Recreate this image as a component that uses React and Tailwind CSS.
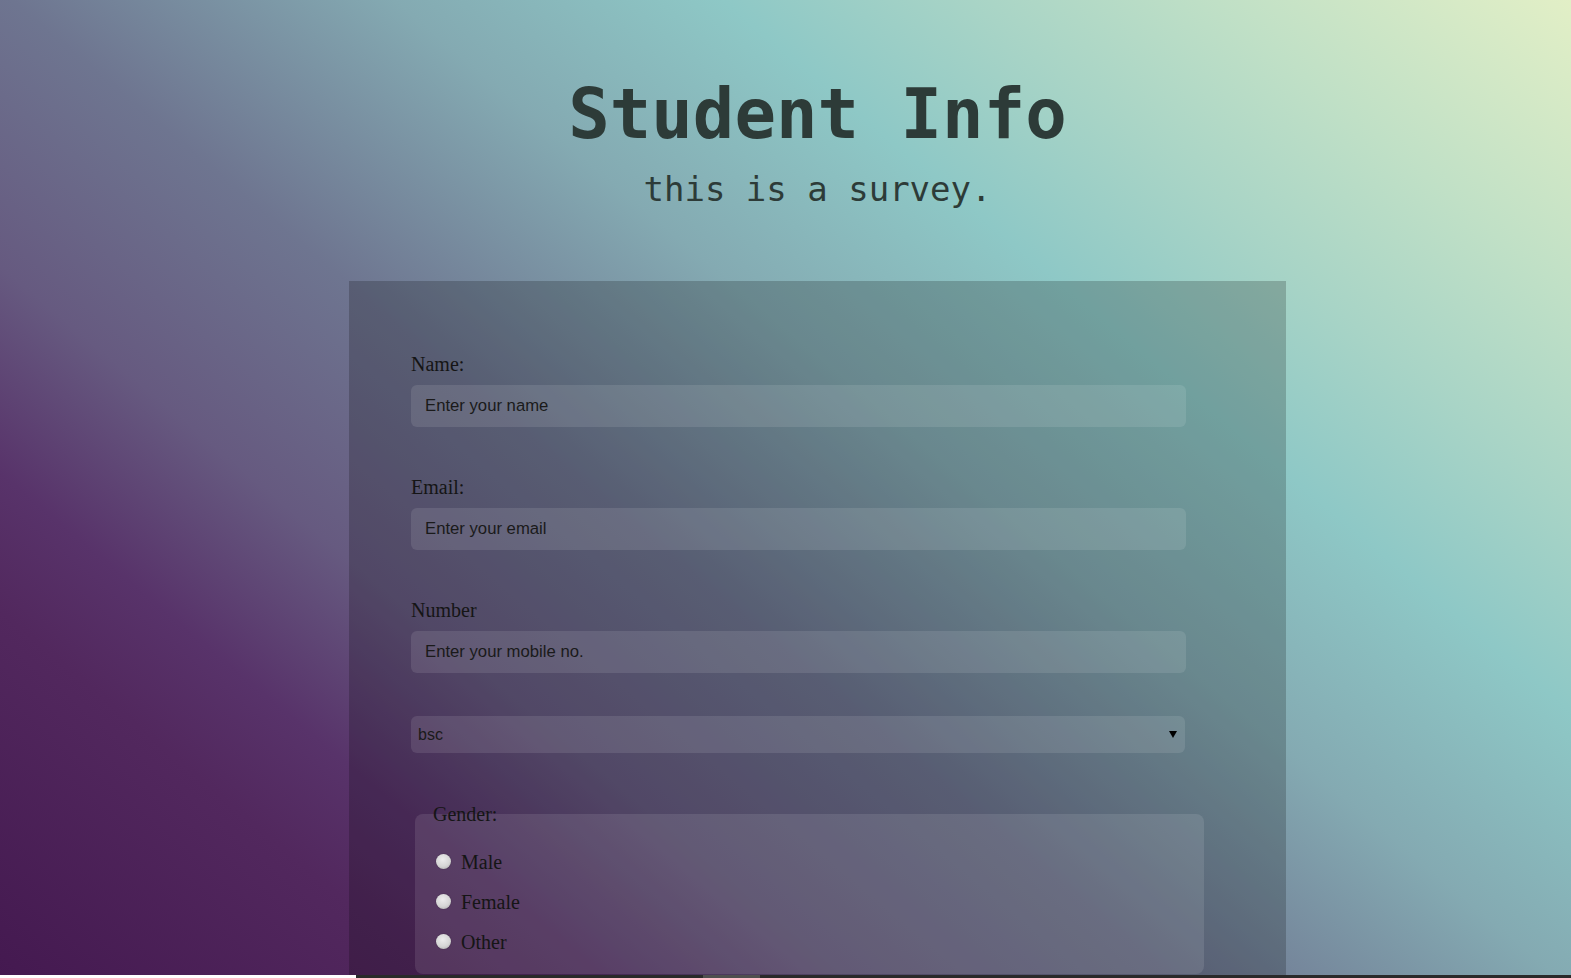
import { useState } from 'react';

const FIELDS = [
  { id: 'name', label: 'Name:', type: 'text', placeholder: 'Enter your name' },
  { id: 'email', label: 'Email:', type: 'email', placeholder: 'Enter your email' },
  { id: 'number', label: 'Number', type: 'tel', placeholder: 'Enter your mobile no.' },
];

const GENDERS = ['Male', 'Female', 'Other'];

export default function App() {
  const [course, setCourse] = useState('bsc');
  const [gender, setGender] = useState('');

  return (
    <div className="min-h-screen bg-fixed bg-[linear-gradient(40deg,#441950_0%,#52285e_16%,#58336a_22%,#665a80_31%,#6e7590_43%,#84aab2_57%,#8ec8c6_69%,#a8d4c6_78%,#c0e0c6_87%,#e2efc6_100%)] pl-[64px]">
      {/* header */}
      <div className="pt-[80px] text-center font-['DejaVu_Sans_Mono',monospace] text-[#2d3b38]">
        <h1 className="text-[69px] font-bold leading-none">Student Info</h1>
        <p className="mt-[23px] text-[34px] leading-none">this is a survey.</p>
      </div>

      {/* form */}
      <form className="mx-auto mt-[75px] w-[937px] bg-black/20 px-[62px] pt-[72px] pb-[60px] font-['Liberation_Serif',serif] text-[#151515]">
        {FIELDS.map((f, i) => (
          <div key={f.id} className={i > 0 ? 'mt-[49px]' : ''}>
            <label htmlFor={f.id} className="mb-[10px] block text-[20px] leading-[22px]">
              {f.label}
            </label>
            <input
              id={f.id}
              type={f.type}
              placeholder={f.placeholder}
              className="block h-[42px] w-[775px] rounded-md bg-white/10 pl-[14px] font-['Liberation_Sans',Arial,sans-serif] text-[16.7px] text-[#1a1a1a] outline-none placeholder:text-[#1a1a1a]"
            />
          </div>
        ))}

        <div className="relative mt-[43px] w-[774px]">
          <select
            value={course}
            onChange={(e) => setCourse(e.target.value)}
            className="block h-[37px] w-full appearance-none rounded-md bg-white/10 pl-[7px] font-['Liberation_Sans',Arial,sans-serif] text-[16px] text-[#1a1a1a] outline-none"
          >
            <option value="bsc">bsc</option>
            <option value="bca">bca</option>
            <option value="btech">btech</option>
          </select>
          <svg
            className="pointer-events-none absolute right-[8px] top-[15px]"
            width="8"
            height="7"
            viewBox="0 0 8 7"
          >
            <path d="M0 0H8L4 7Z" fill="#000" />
          </svg>
        </div>

        <fieldset className="mt-[50px] ml-[4px] w-[789px] rounded-lg bg-white/10 pl-[18px] pb-[12px]">
          <legend className="text-[20px] leading-[22px]">Gender:</legend>
          <div className="mt-[17px]">
            {GENDERS.map((g) => (
              <label key={g} className="flex h-[40px] cursor-pointer items-center text-[20px] leading-[22px]">
                <input
                  type="radio"
                  name="gender"
                  value={g}
                  checked={gender === g}
                  onChange={() => setGender(g)}
                  className="mb-[2px] ml-[3px] h-[15px] w-[15px] cursor-pointer appearance-none rounded-full bg-[radial-gradient(circle_at_45%_35%,#ececec_0%,#d6d6d6_55%,#a4a4a4_100%)] shadow-[0_0_1px_rgba(0,0,0,0.5)] checked:bg-[radial-gradient(circle,#333_0%,#333_30%,#d6d6d6_35%,#a4a4a4_100%)]"
                />
                <span className="ml-[10px]">{g}</span>
              </label>
            ))}
          </div>
        </fieldset>
      </form>

      {/* bottom scrollbar strip */}
      <div className="fixed bottom-0 left-0 right-0 flex h-[3px]">
        <div className="w-[356px] bg-white" />
        <div className="flex flex-1 bg-[#2a2a2a]">
          <div className="ml-[347px] w-[57px] bg-[#4f4f4f]" />
        </div>
      </div>
    </div>
  );
}
